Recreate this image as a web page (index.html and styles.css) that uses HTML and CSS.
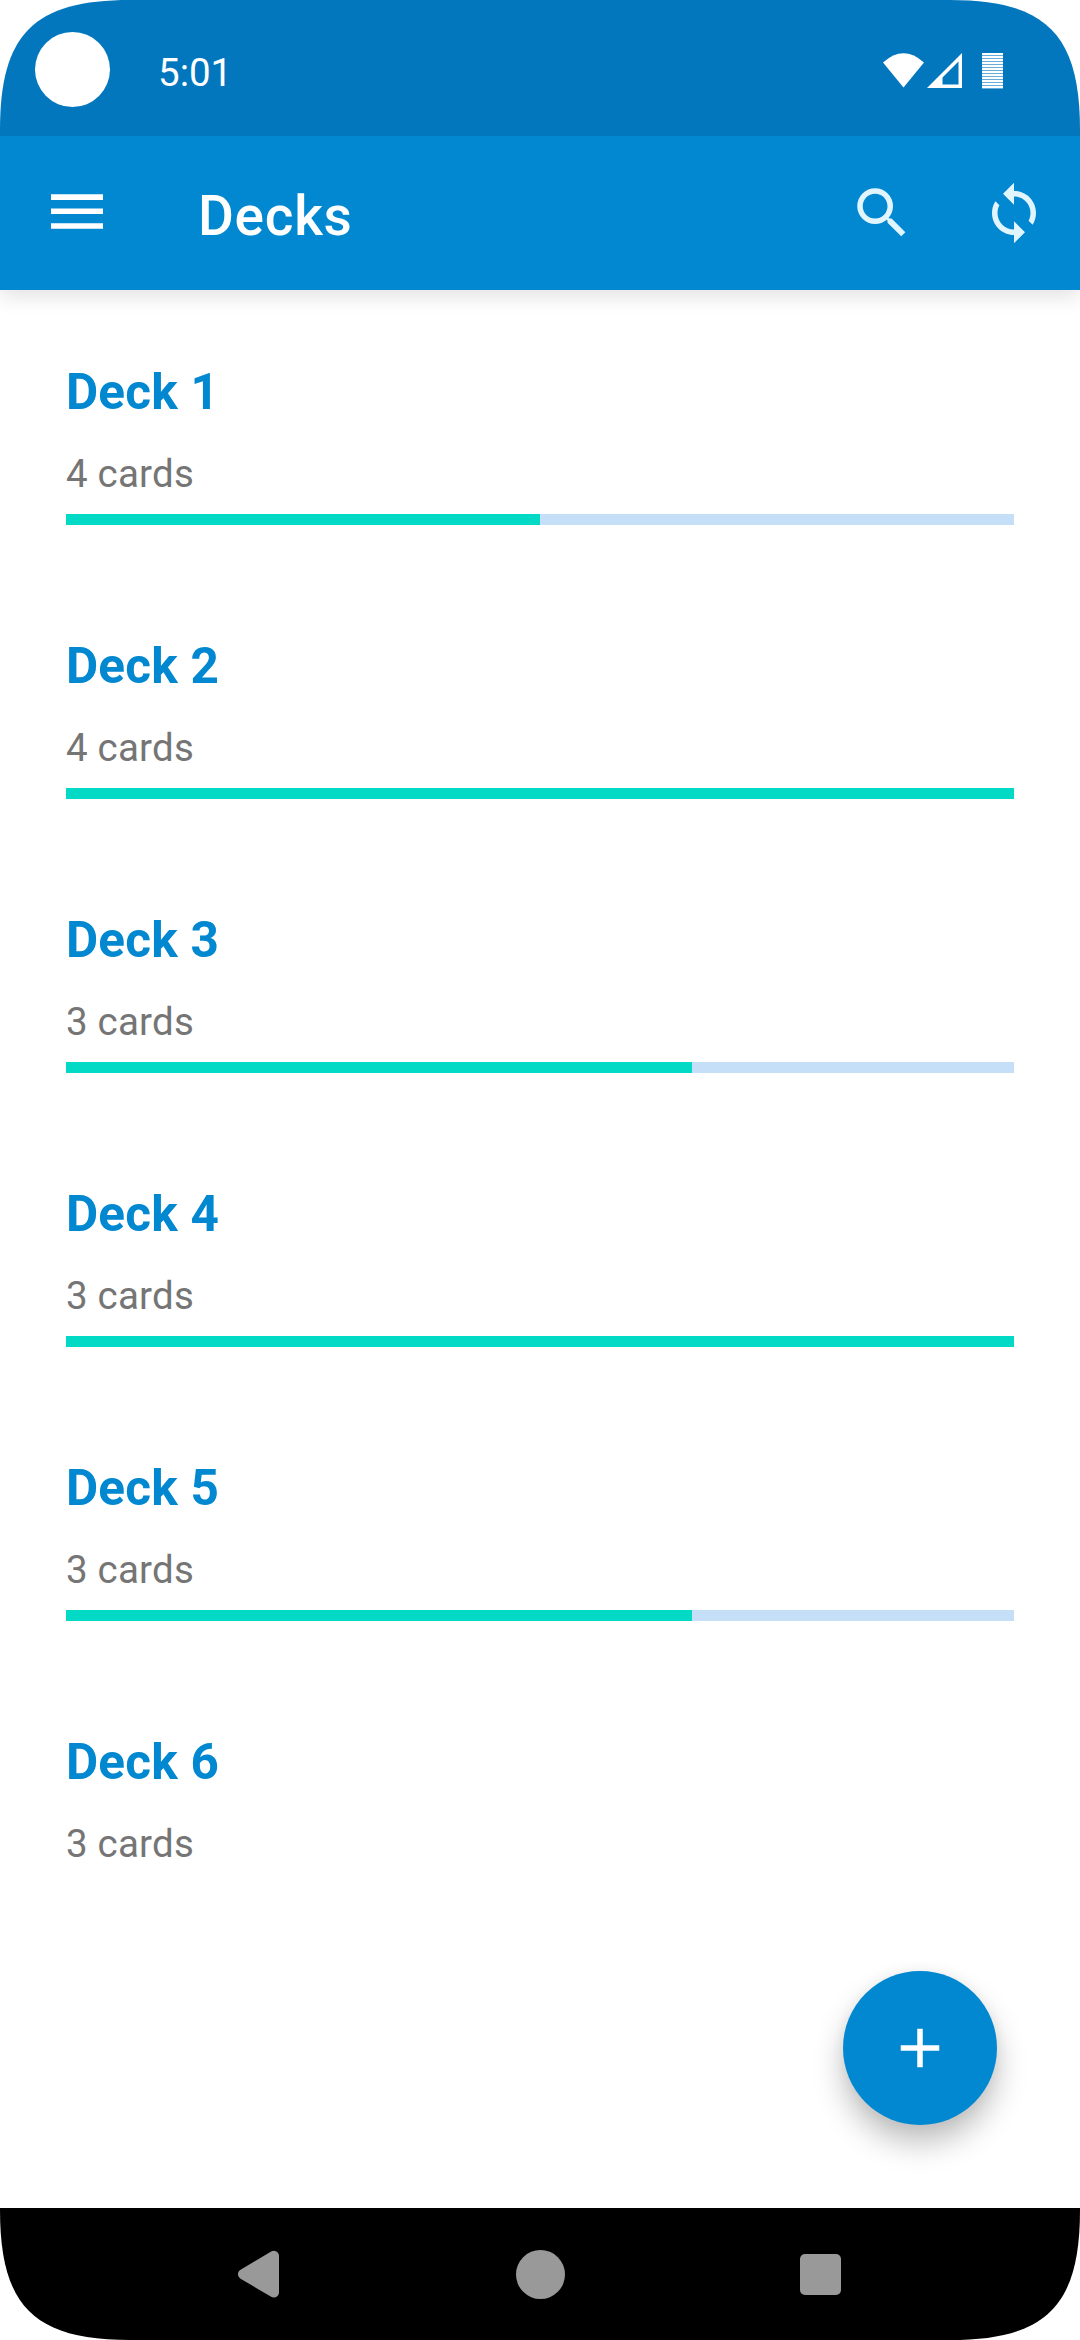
FILE: index.html
```html
<!DOCTYPE html>
<html lang="en">
<head>
<meta charset="utf-8">
<title>Decks</title>
<link rel="stylesheet" href="styles.css">
</head>
<body>
<div class="screen">
  <header class="status-bar">
    <span class="camera"></span>
    <span class="clock">5:01</span>
    <svg class="status-icons" width="122" height="38" viewBox="882 52 122 38" fill="#fff">
      <path d="M883 62.5Q903.500 44 924 62.500L903.500 87.500Z"/>
      <path fill-rule="evenodd" d="M927 88L962 53V88ZM942.500 77.500V84.500H958.500V61.500Z"/>
      <path fill-opacity=".4" d="M982 53h21v36h-21z"/>
      <path stroke="#fff" stroke-width="21" stroke-dasharray="2 1" d="M992.500 53V89"/>
    </svg>
  </header>
  <div class="app-bar">
    <svg class="menu-icon" width="52" height="36" viewBox="0 0 52 36" fill="#fff"><path d="M0 .200h52v5.700H0zM0 14.500h52v5.600H0zM0 29.200h52v5.600H0z"/></svg>
    <h1 class="title">Decks</h1>
    <svg class="action" viewBox="0 0 24 24"><path d="M15.500 14h-.79l-.28-.27A6.471 6.471 0 0 0 16 9.500 6.500 6.500 0 1 0 9.500 16c1.610 0 3.090-.59 4.230-1.570l.27.28v.79l5 4.990L20.490 19l-4.990-5zm-6 0C7.010 14 5 11.990 5 9.500S7.010 5 9.500 5 14 7.010 14 9.500 11.990 14 9.500 14z"/></svg>
    <svg class="action" viewBox="0 0 24 24"><path d="M12 4V1L8 5l4 4V6c3.310 0 6 2.690 6 6 0 1.010-.25 1.970-.7 2.800l1.460 1.460A7.930 7.930 0 0 0 20 12c0-4.420-3.580-8-8-8zm0 14c-3.310 0-6-2.690-6-6 0-1.010.25-1.970.7-2.800L5.240 7.740A7.930 7.930 0 0 0 4 12c0 4.420 3.580 8 8 8v3l4-4-4-4v3z"/></svg>
  </div>
  <main class="decks">
    <section class="deck"><h2>Deck 1</h2><p>4 cards</p><div class="track"><div class="fill" style="width:50%"></div></div></section>
    <section class="deck"><h2>Deck 2</h2><p>4 cards</p><div class="track"><div class="fill" style="width:100%"></div></div></section>
    <section class="deck"><h2>Deck 3</h2><p>3 cards</p><div class="track"><div class="fill" style="width:66%"></div></div></section>
    <section class="deck"><h2>Deck 4</h2><p>3 cards</p><div class="track"><div class="fill" style="width:100%"></div></div></section>
    <section class="deck"><h2>Deck 5</h2><p>3 cards</p><div class="track"><div class="fill" style="width:66%"></div></div></section>
    <section class="deck"><h2>Deck 6</h2><p>3 cards</p></section>
  </main>
  <button class="fab" aria-label="Add"><svg width="66" height="66" viewBox="0 0 24 24" fill="#fff"><path d="M19 13h-6v6h-2v-6H5v-2h6V5h2v6h6z"/></svg></button>
  <nav class="nav-bar">
    <svg width="42" height="48" viewBox="0 0 42 48"><path d="M5.200 24.200L35.800 6V42.400Z" fill="#999" stroke="#999" stroke-width="10.400" stroke-linejoin="round"/></svg>
    <span class="home"></span>
    <span class="recent"></span>
  </nav>
</div>
</body>
</html>
```
FILE: styles.css
```css
* { box-sizing: border-box; margin: 0; padding: 0; }
body { background: #fff; font-family: Roboto, sans-serif; }
.screen {
  position: relative;
  display: flex;
  flex-direction: column;
  width: 1080px;
  height: 2340px;
  overflow: hidden;
  background: #fff;
  clip-path: path("M0 130C0 34 34 0 130 0H950C1046 0 1080 34 1080 130V2210C1080 2306 1046 2340 950 2340H130C34 2340 0 2306 0 2210Z");
}
.status-bar {
  position: relative;
  z-index: 1;
  display: flex;
  align-items: flex-start;
  height: 136px;
  padding: 32px 76px 0 35px;
  background: #0277bd;
  color: #fff;
}
.camera { width: 75px; height: 75px; border-radius: 50%; background: #fff; }
.clock { margin: 18px 0 0 48px; font-size: 38.500px; line-height: 46px; }
.status-icons { margin: 20px 0 0 auto; }
.app-bar {
  position: relative;
  display: flex;
  align-items: center;
  height: 154px;
  flex: none;
  padding: 0 33px 0 51px;
  background: #0288d1;
  box-shadow: 0 6px 20px rgba(0, 0, 0, .12);
}
.menu-icon { margin-top: -2px; }
.title { margin: 6px auto 0 95px; font-size: 55px; font-weight: 500; line-height: 64px; letter-spacing: .7px; color: #fff; }
.action { width: 66px; height: 66px; fill: #e1f5fe; }
.action + .action { margin-left: 66px; }
.decks { display: flex; flex: 1; flex-direction: column; padding: 73px 66px 0; }
.deck { height: 274px; }
.deck h2 { font-size: 49.500px; font-weight: 700; line-height: 58px; letter-spacing: .2px; color: #0288d1; }
.deck p { margin-top: 30px; font-size: 38.500px; line-height: 46px; letter-spacing: .2px; color: #757575; }
.track { height: 11px; margin-top: 17px; background: #c5dff8; }
.fill { height: 11px; background: #03dac6; }
.fab {
  position: absolute;
  right: 83px;
  bottom: 215px;
  display: grid;
  place-items: center;
  width: 154px;
  height: 154px;
  border: 0;
  border-radius: 50%;
  background: #0288d1;
  box-shadow: 0 18px 30px rgba(0, 0, 0, .25), 0 0 14px rgba(0, 0, 0, .05);
}
.nav-bar {
  display: flex;
  flex: none;
  align-items: center;
  justify-content: space-between;
  height: 132px;
  padding: 0 239px 0 238px;
  background: #000;
}
.home { width: 49px; height: 49px; border-radius: 50%; background: #999; }
.recent { width: 41px; height: 41px; border-radius: 5px; background: #999; }
```
